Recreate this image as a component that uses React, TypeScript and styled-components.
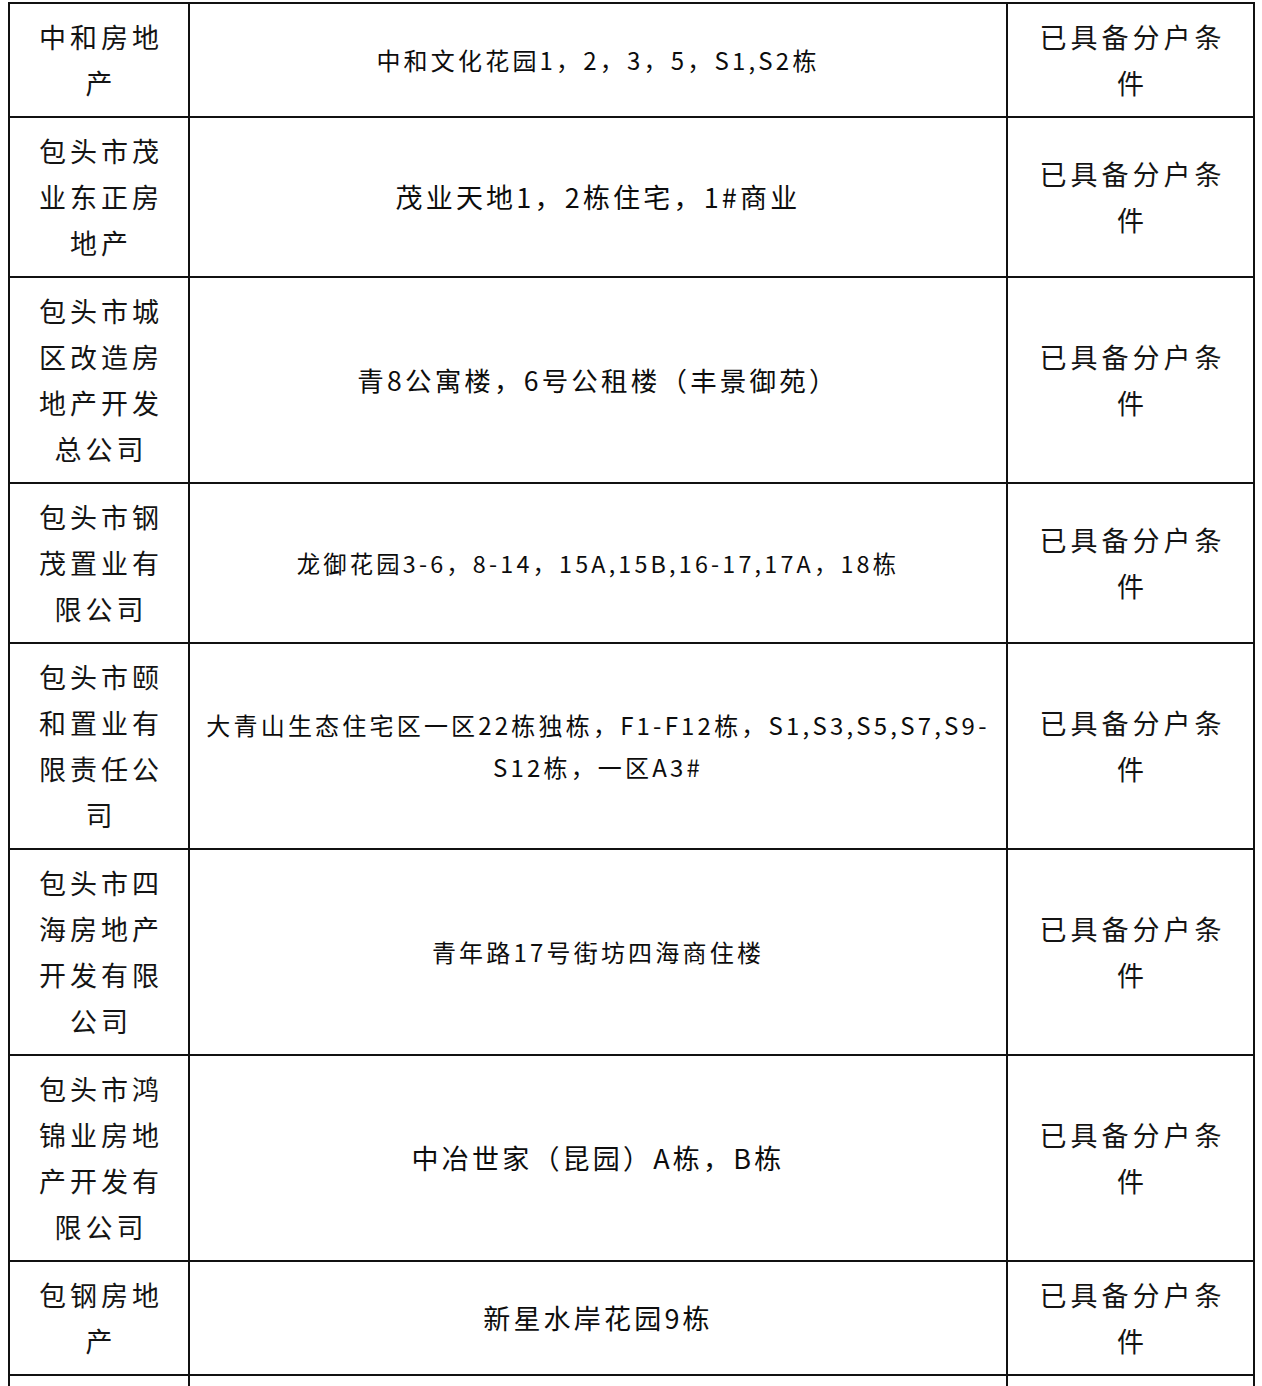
import React from 'react';
import styled, {createGlobalStyle} from "styled-components";

const GlobalStyle = createGlobalStyle`
    html, body {
        margin: 0;
        padding: 0;
        background: #ffffff;
    }
    body {
        font-family: "Noto Sans CJK SC", "Noto Sans", sans-serif;
        color: #141414;
    }
`

type Item = {
    company: string[]
    project: string[]
    size: number
}

const items: Item[] = [
    {company: ["中和房地", "产"], project: ["中和文化花园1，2，3，5，S1,S2栋"], size: 24},
    {company: ["包头市茂", "业东正房", "地产"], project: ["茂业天地1，2栋住宅，1#商业"], size: 27},
    {company: ["包头市城", "区改造房", "地产开发", "总公司"], project: ["青8公寓楼，6号公租楼（丰景御苑）"], size: 26.5},
    {company: ["包头市钢", "茂置业有", "限公司"], project: ["龙御花园3-6，8-14，15A,15B,16-17,17A，18栋"], size: 23.3},
    {company: ["包头市颐", "和置业有", "限责任公", "司"], project: ["大青山生态住宅区一区22栋独栋，F1-F12栋，S1,S3,S5,S7,S9-", "S12栋，一区A3#"], size: 24},
    {company: ["包头市四", "海房地产", "开发有限", "公司"], project: ["青年路17号街坊四海商住楼"], size: 24},
    {company: ["包头市鸿", "锦业房地", "产开发有", "限公司"], project: ["中冶世家（昆园）A栋，B栋"], size: 27},
    {company: ["包钢房地", "产"], project: ["新星水岸花园9栋"], size: 27},
]

const status = ["已具备分户条", "件"]

export default function App() {
    return (
        <>
            <GlobalStyle/>
            <Page>
                <Table>
                    <tbody>
                    {items.map((item, i) => (
                        <Row key={i}>
                            <NameCell>
                                {item.company.map((line, j) => <Line key={j}>{line}</Line>)}
                            </NameCell>
                            <ProjectCell $size={item.size}>
                                {item.project.map((line, j) => <ProjectLine key={j}>{line}</ProjectLine>)}
                            </ProjectCell>
                            <StatusCell>
                                {status.map((line, j) => <Line key={j}>{line}</Line>)}
                            </StatusCell>
                        </Row>
                    ))}
                    <Row>
                        <NameCell><Line>&nbsp;</Line><Line>&nbsp;</Line></NameCell>
                        <ProjectCell $size={24}/>
                        <StatusCell/>
                    </Row>
                    </tbody>
                </Table>
            </Page>
        </>
    );
}

const Page = styled.div`
    padding: 2px 0 0 8px;
`

const Table = styled.table`
    border-collapse: separate;
    border-spacing: 0;
    table-layout: fixed;
    width: 1247px;
    border-top: 2px solid #111;
    border-left: 2px solid #111;
`

const Row = styled.tr``

const Cell = styled.td`
    box-sizing: border-box;
    border-right: 2px solid #111;
    border-bottom: 2px solid #111;
    padding: 10px 0;
    text-align: center;
    vertical-align: middle;
`

const NameCell = styled(Cell)`
    width: 180px;
    font-size: 27px;
    line-height: 46px;
    letter-spacing: 4px;
    text-indent: 4px;
`

const ProjectCell = styled(Cell)<{ $size: number }>`
    width: 818px;
    font-size: ${p => p.$size}px;
    line-height: 42px;
    letter-spacing: 3.2px;
    color: #0d0d0d;
`

const StatusCell = styled(Cell)`
    width: 247px;
    font-size: 27px;
    line-height: 46px;
    letter-spacing: 4px;
    text-indent: 4px;
`

const Line = styled.div``

const ProjectLine = styled.div`
    white-space: nowrap;
`
